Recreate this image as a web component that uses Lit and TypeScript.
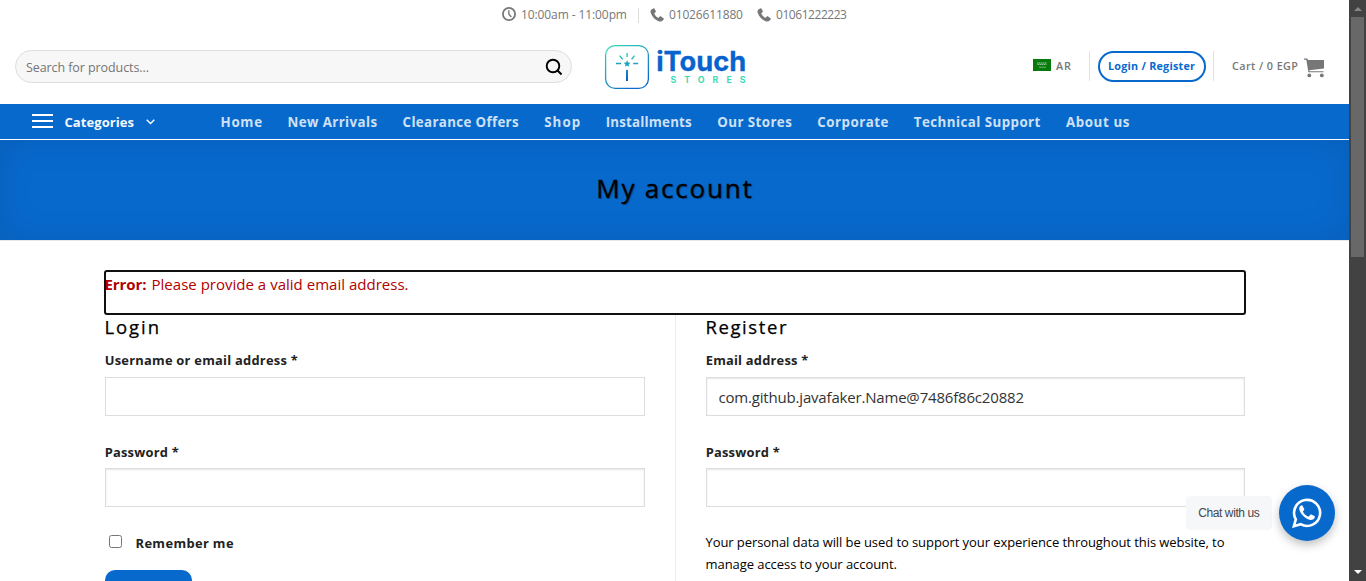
import { LitElement, html, svg, css } from "lit";
import { customElement, property } from "lit/decorators.js";

/** A single line of text, tracked so that it fills a given width. */
@customElement("fit-text")
class FitText extends LitElement {
  static styles = css`
    :host { display: inline-block; white-space: pre; }
  `;
  @property() text = "";
  @property({ type: Number }) w = 0;
  render() {
    return html`<span>${this.text}</span>`;
  }
  updated() {
    const s = this.renderRoot.querySelector("span") as HTMLElement;
    s.style.letterSpacing = "0px";
    const n = s.getBoundingClientRect().width;
    const gap = (this.w - n) / Math.max(1, this.text.length - 1);
    s.style.letterSpacing = gap.toFixed(3) + "px";
    s.style.marginRight = (-gap).toFixed(3) + "px";
  }
}

const t = (text: string, w: number) => html`<fit-text .text=${text} .w=${w}></fit-text>`;

const phone = svg`<svg class="ph" width="14" height="14" viewBox="0 0 14 14"><path fill="#777" d="M3.3.4 1.4 1.5C.4 2.3.3 3.7.8 5c1.2 3.6 4 6.7 7.7 8.2 1.6.6 3.3.5 4.2-.6l1-1.3c.3-.4.2-.8-.2-1.1L10.8 8.3c-.4-.2-.8-.2-1.1.2l-.9 1.1c-.2.2-.5.2-.8.1C6.2 8.7 5.1 7.3 4.4 5.7c-.1-.3-.1-.5.2-.8l1-.8c.4-.3.4-.7.2-1.1L4.5.7C4.2.3 3.7.2 3.3.4Z"/></svg>`;

const nav: [string, number][] = [
  ["Home", 41.5], ["New Arrivals", 89.5], ["Clearance Offers", 116], ["Shop", 36],
  ["Installments", 86], ["Our Stores", 74.5], ["Corporate", 71], ["Technical Support", 126.5], ["About us", 63.5],
];

@customElement("app-root")
class AppRoot extends LitElement {
  static styles = css`
    :host { display: block; position: relative; height: 581px; overflow: hidden; background: #fff; font-family: "Open Sans", "Noto Sans", sans-serif; color: #222; }
    * { box-sizing: border-box; }
    svg { display: block; flex: none; }
    .frame { display: flex; height: 581px; }
    .page { width: 1349px; flex: none; overflow: hidden; }
    .top { height: 30px; padding-left: 502px; display: flex; align-items: center; font-size: 12px; line-height: 18px; color: #777; }
    .top .clock { margin: -2px 5px 0 0; }
    .top .bar { width: 1px; height: 15px; background: #ddd; margin: 0 11px 0 11px; }
    .top .ph { margin: -1px 5px 0 0; }
    .top .second { margin-left: 14px; }
    .head { height: 74px; padding: 0 25px 0 15px; display: flex; }
    .search { width: 557px; height: 33px; margin-top: 20px; border: 1px solid #ddd; border-radius: 17px; background: #f7f7f7; display: flex; align-items: center; justify-content: space-between; padding: 1px 8.5px 0 10px; font-size: 12.5px; color: #757575; }
    .logo { margin: 13px 0 0 30px; }
    .tools { margin-left: auto; height: 30px; margin-top: 21px; display: flex; align-items: center; font-size: 10.8px; font-weight: 600; color: #777; }
    .tools fit-text { margin-top: -1px; }
    .tools .flag { margin-right: 5px; margin-top: -2px; }
    .tools .bar { width: 1px; height: 30px; background: #e2e2e2; }
    .tools .a { margin: 0 8px 0 18px; }
    .tools .b { margin: 0 18px 0 7px; }
    .pill { width: 108px; height: 31px; border: 2px solid #0869cd; border-radius: 16px; color: #0869cd; font-weight: 700; display: flex; align-items: center; justify-content: center; padding-right: 1px; }
    .cart { margin-left: 6px; margin-top: 3px; }
    .nav { height: 36px; background: #0869cd; border-bottom: 1px solid #fff; display: flex; align-items: center; color: #fff; font-size: 13px; font-weight: 700; }
    .nav fit-text { margin-top: 1px; }
    .cat { display: flex; align-items: center; width: 220px; padding-left: 32px; color: #f3f8fd; }
    .cat .burger { margin: -2px 11.5px 0 0; }
    .cat .chev { margin-left: 11.5px; margin-top: 1px; }
    .links { display: flex; gap: 25.55px; margin-left: 0.5px; color: #cee1f5; font-size: 13.3px; }
    .title { height: 101px; background: #0869cd; box-shadow: inset 0 0 34px rgba(0, 0, 0, 0.1); border-bottom: 1px solid #e8e8e8; display: flex; justify-content: center; padding: 28px 1px 0 0; color: #000; font-size: 26px; line-height: 40px; font-weight: 500; -webkit-text-stroke: 0.3px #000; text-shadow: 1px 1px 1px rgba(0, 0, 0, 0.35); }
    .main { width: 1140px; margin: 30px 0 0 105px; }
    .error { height: 43px; outline: 2px solid #101010; outline-offset: -1px; border-radius: 2px; font-size: 15px; line-height: 27px; color: #b20000; display: flex; gap: 5px; }
    .error .strong { font-weight: 700; margin-left: -0.5px; }
    .cols { display: flex; }
    .col { width: 570px; height: 300px; padding-right: 30px; }
    .col.right { padding: 0 0 0 30px; border-left: 1px solid #ececec; }
    .col h3 { margin: 0 0 9px -0.5px; font-size: 18.5px; font-weight: 500; line-height: 26px; color: #000; height: 26px; -webkit-text-stroke: 0.25px #000; }
    .label { display: block; height: 28px; line-height: 23px; font-size: 12.9px; font-weight: 700; color: #222; margin-left: -0.3px; }
    .label.second { margin-top: 25px; height: 27px; }
    .input { height: 39px; border: 1px solid #ddd; box-shadow: inset 0 1px 2px rgba(0, 0, 0, 0.1); padding: 0 11.5px; line-height: 38px; font-size: 15px; color: #333; }
    .input.flat { box-shadow: none; }
    .remember { display: flex; margin: 25px 0 0 4px; height: 22px; align-items: center; font-size: 12.9px; font-weight: 700; }
    .remember fit-text { margin-top: -1px; }
    .box { width: 13px; height: 13px; border: 1px solid #767676; border-radius: 2.5px; margin: 0 13.5px 4px 0; background: #fff; }
    .btn { width: 87px; height: 39px; margin-top: 16px; border-radius: 10px; background: #0869cd; }
    .note { margin: 24px 0 0 -0.5px; font-size: 13px; line-height: 22px; color: #000; display: flex; flex-direction: column; }
    .scroll { width: 17px; background: #424242; display: flex; flex-direction: column; align-items: center; }
    .scroll .up { margin-top: 7px; }
    .thumb { width: 13px; height: 240px; margin-top: 6px; background: #686868; }
    .scroll .down { margin: auto 0 7px; }
    .chat { position: absolute; right: 31px; top: 485px; display: flex; align-items: center; gap: 7px; }
    .tip { width: 86px; height: 34px; border-radius: 4px; background: #f5f7f9; color: #43474e; font: 12px/34px "Liberation Sans", Arial, sans-serif; text-align: center; }
    .wa { width: 56px; height: 56px; border-radius: 50%; background: #0869cd; box-shadow: 0 4px 10px rgba(0, 0, 0, 0.25); display: flex; align-items: center; justify-content: center; }
  `;

  logo() {
    return html`<svg class="logo" width="146" height="50" viewBox="602 43 146 50">
      <defs>
        <linearGradient id="g" x1="0" y1="0" x2="0.6" y2="1"><stop offset="0" stop-color="#38dbb5"/><stop offset="1" stop-color="#0b6bcb"/></linearGradient>
        <linearGradient id="h" gradientUnits="userSpaceOnUse" x1="0" y1="54" x2="0" y2="80"><stop offset="0" stop-color="#2ccbb9"/><stop offset="1" stop-color="#0b5fc8"/></linearGradient>
      </defs>
      <rect x="605.6" y="45.6" width="42.8" height="42.8" rx="9.5" fill="none" stroke="url(#g)" stroke-width="1.3"/>
      <g fill="none" stroke="url(#h)" stroke-width="1.4">
        <path d="M627.1 53 627.11 57M619.6 55.6 622.6 59.2M634.6 55.6 631.6 59.2M616 63.5 621 63.51M633.2 63.5 638.2 63.51"/>
        <path stroke-width="2" d="M627 70 627.01 81"/>
      </g>
      <path fill="#18a5bd" d="m627.1 60.3 1 2.2 2.4.3-1.8 1.6.5 2.4-2.1-1.2-2.1 1.2.5-2.4-1.8-1.6 2.4-.3Z"/>
      <text x="656.2" y="71" font-family="Inter" font-weight="700" font-size="26.5" fill="#0763ce" stroke="#0763ce" stroke-width=".3" textLength="90" lengthAdjust="spacingAndGlyphs">iTouch</text>
      <text x="670.5" y="82.5" font-family="Inter" font-weight="700" font-size="8.8" fill="#3bdcb5" textLength="75">STORES</text>
    </svg>`;
  }

  render() {
    return html`
    <div class="frame">
      <div class="page">
        <div class="top">
          <svg class="clock" width="14" height="14" viewBox="0 0 14 14" fill="none" stroke="#777"><circle cx="7" cy="7" r="6.1" stroke-width="1.8"/><path d="M6.8 3.2V7l2.5 3" stroke-width="1.4"/></svg>
          ${t("10:00am - 11:00pm", 106)}<span class="bar"></span>
          ${phone}${t("01026611880", 74)}<span class="second"></span>${phone}${t("01061222223", 71)}
        </div>
        <div class="head">
          <div class="search">${t("Search for products...", 123)}
            <svg width="18" height="18" viewBox="0 0 18 18" fill="none" stroke="#000" stroke-width="1.9"><circle cx="8" cy="8" r="6.3"/><path d="m12.3 12.3 4.3 4.2"/></svg>
          </div>
          ${this.logo()}
          <div class="tools">
            <svg class="flag" width="18" height="12" viewBox="0 0 18 12"><path fill="#067a0a" d="M0 0h18v12H0z"/><path d="M4 4h10M4.5 5.4h9" stroke="#a3cfa4" stroke-width="1" stroke-dasharray="1.5 .5"/><path d="M6 8.2h7" stroke="#8bc98d" stroke-width=".8"/></svg>
            ${t("AR", 15)}<span class="bar a"></span>
            <div class="pill">${t("Login / Register", 87)}</div>
            <span class="bar b"></span>${t("Cart / 0 EGP", 66)}
            <svg class="cart" width="20" height="20" viewBox="0 0 20 20" fill="#777"><path d="M0 .5h3.4l.6 1.4H20v8.6L5.2 12.2l.2 1H19.5v1.1H4.4L2.3 1.7H0z"/><circle cx="5.3" cy="17.4" r="1.9"/><circle cx="17.8" cy="17.4" r="1.9"/></svg>
          </div>
        </div>
        <div class="nav">
          <div class="cat">
            <svg class="burger" width="21" height="14" viewBox="0 0 21 14" fill="#fff"><path d="M0 0h21v2H0zM0 6h21v2H0zM0 12h21v2H0z"/></svg>
            ${t("Categories", 69.5)}
            <svg class="chev" width="9" height="6" viewBox="0 0 9 6" fill="none" stroke="#fff" stroke-width="1.4"><path d="m.7.8 3.8 3.8L8.3.8"/></svg>
          </div>
          <div class="links">${nav.map(([s, w]) => t(s, w))}</div>
        </div>
        <div class="title">${t("My account", 155.5)}</div>
        <div class="main">
          <div class="error"><span class="strong">${t("Error:", 42)}</span>${t("Please provide a valid email address.", 257)}</div>
          <div class="cols">
            <div class="col">
              <h3>${t("Login", 54.5)}</h3>
              <div class="label">${t("Username or email address *", 193)}</div><div class="input flat"></div>
              <div class="label second">${t("Password *", 74)}</div><div class="input"></div>
              <div class="remember"><span class="box"></span>${t("Remember me", 98)}</div>
              <div class="btn"></div>
            </div>
            <div class="col right">
              <h3>${t("Register", 81)}</h3>
              <div class="label">${t("Email address *", 102.5)}</div>
              <div class="input">${t("com.github.javafaker.Name@7486f86c20882", 305.5)}</div>
              <div class="label second">${t("Password *", 74)}</div><div class="input"></div>
              <div class="note">${t("Your personal data will be used to support your experience throughout this website, to", 519)}${t("manage access to your account.", 191.5)}</div>
            </div>
          </div>
        </div>
      </div>
      <div class="scroll">
        <svg class="up" width="8" height="4" viewBox="0 0 8 4"><path fill="#868686" d="M0 4 4 0l4 4z"/></svg>
        <div class="thumb"></div>
        <svg class="down" width="8" height="4" viewBox="0 0 8 4"><path fill="#fff" d="M0 0h8L4 4z"/></svg>
      </div>
    </div>
    <div class="chat">
      <div class="tip">${t("Chat with us", 61.5)}</div>
      <div class="wa"><svg width="30" height="30" viewBox="0 0 30 30"><path fill="none" stroke="#fff" stroke-width="2.6" d="M1.9 28.2 3.8 21.3A13 13 0 1 1 8.7 26.2Z"/><path fill="#fff" d="M10.7 8c-.3-.6-.6-.7-1.3-.6-1.1.2-2.3 1.6-2.2 3.4.3 4.2 6.3 10.6 11.3 11.2 2 .2 3.9-1 4.2-2.5.2-.9.1-1.3-.3-1.5l-3.1-1.5c-.5-.2-.8-.1-1.1.3l-1.1 1.4c-.3.3-.6.4-1 .2-2.2-.9-3.8-2.4-5-4.5-.2-.4-.1-.6.2-.9l.8-1.1c.2-.4.2-.6.1-1z"/></svg></div>
    </div>`;
  }
}
